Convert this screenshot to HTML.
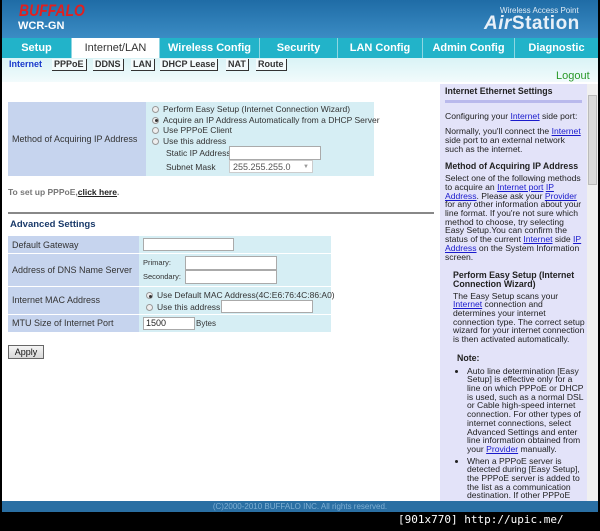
<!DOCTYPE html>
<html><head><style>
*{margin:0;padding:0;box-sizing:border-box}
body{width:600px;height:531px;background:#000;font-family:"Liberation Sans",Arial,sans-serif;position:relative;overflow:hidden;font-size:9px;color:#333}
.a{position:absolute}
#page{left:2px;top:0;width:596px;height:512px;background:#fff}
#hdr{left:2px;top:0;width:596px;height:38px;background:linear-gradient(#1f6ca6,#3b8cc4)}
.tab{position:absolute;top:38px;height:20px;background:#22b3c9;color:#fff;font-weight:bold;font-size:11px;text-align:center;line-height:20px;border-right:1px solid #8fd6e2}
.tab.on{background:#fff;color:#333;font-weight:normal}
#sub{left:2px;top:58px;width:596px;height:24px;background:linear-gradient(#d9f3f6,#f2fbfc)}
.st{position:absolute;top:59px;font-size:9px;font-weight:bold;color:#333;border-right:1px solid #333;border-bottom:1px solid #333;padding:0 2px;line-height:11px;background:#f4fbfc}
a{color:#1a1acc;text-decoration:underline}
.lab{background:#c6d4ee}
.val{background:#d6eef4}
input.t{border:1px solid #aaa;background:#fff;height:12px;position:absolute}
.rad{display:inline-block;width:7px;height:7px;border:1px solid #999;border-radius:50%;background:#eee;vertical-align:middle;margin-right:4px;position:relative}
.rad.on::after{content:"";position:absolute;left:1.5px;top:1.5px;width:3px;height:3px;border-radius:50%;background:#333}
#help{left:440px;top:84px;width:147px;height:417px;background:#e3e3f9;font-size:8.6px;color:#222;line-height:8.7px;padding:3px 2px 3px 5px;overflow:hidden}
#help p{margin-bottom:7px}
#help h4{font-size:8.8px;margin-bottom:4px}
</style></head><body>
<div class="a" id="page"></div>
<div class="a" id="hdr"></div>
<div class="a" style="left:19px;top:1px;color:#e02020;font-weight:bold;font-style:italic;font-size:17px;transform:scaleX(0.82);transform-origin:left top">BUFFALO</div>
<div class="a" style="left:18px;top:20px;color:#fff;font-weight:bold;font-size:11px">WCR-GN</div>
<div class="a" style="left:500px;top:6px;color:#dfeaf4;font-size:8px">Wireless Access Point</div>
<div class="a" style="left:484px;top:13px;color:#e8f0f8;font-weight:bold;font-size:19px;letter-spacing:0.5px"><i>Air</i>Station</div>
<div class="tab" style="left:2px;width:70px">Setup</div>
<div class="tab on" style="left:72px;width:88px">Internet/LAN</div>
<div class="tab" style="left:160px;width:100px">Wireless Config</div>
<div class="tab" style="left:260px;width:78px">Security</div>
<div class="tab" style="left:338px;width:85px">LAN Config</div>
<div class="tab" style="left:423px;width:92px">Admin Config</div>
<div class="tab" style="left:515px;width:83px;border:none">Diagnostic</div>
<div class="a" id="sub"></div>
<div class="a" style="left:9px;top:59px;font-size:9px;font-weight:bold;color:#1a3acc;line-height:11px">Internet</div>
<div class="st" style="left:52px">PPPoE</div>
<div class="st" style="left:93px">DDNS</div>
<div class="st" style="left:131px">LAN</div>
<div class="st" style="left:160px">DHCP Lease</div>
<div class="st" style="left:226px">NAT</div>
<div class="st" style="left:256px">Route</div>
<div class="a" style="left:556px;top:70px;color:#2a9a2a;font-size:11px">Logout</div>

<div class="a lab" style="left:8px;top:102px;width:138px;height:74px"></div>
<div class="a val" style="left:146px;top:102px;width:228px;height:74px"></div>
<div class="a" style="left:12px;top:134px;font-size:9px">Method of Acquiring IP Address</div>
<div class="a" style="left:152px;top:104px;font-size:8.5px;line-height:10.5px">
<div><span class="rad"></span>Perform Easy Setup (Internet Connection Wizard)</div>
<div><span class="rad on"></span>Acquire an IP Address Automatically from a DHCP Server</div>
<div><span class="rad"></span>Use PPPoE Client</div>
<div><span class="rad"></span>Use this address</div>
</div>
<div class="a" style="left:166px;top:148px;font-size:8.5px">Static IP Address</div>
<div class="a" style="left:166px;top:162px;font-size:8.5px">Subnet Mask</div>
<input class="t" style="left:229px;top:146px;width:92px;height:14px">
<div class="a" style="left:229px;top:160px;width:84px;height:13px;background:#fff;border:1px solid #ccc;font-size:9px;color:#555;padding-left:3px;line-height:12px">255.255.255.0<span style="position:absolute;right:3px;font-size:6px;color:#999">▼</span></div>
<div class="a" style="left:8px;top:187px;font-size:8.5px;color:#777;font-weight:bold">To set up PPPoE,<span style="color:#222;text-decoration:underline">click here</span>.</div>

<div class="a" style="left:8px;top:212px;width:426px;height:2px;background:#888"></div>
<div class="a" style="left:10px;top:219px;font-size:9.5px;font-weight:bold;color:#1a3a6a">Advanced Settings</div>
<div class="a lab" style="left:8px;top:236px;width:131px;height:96px"></div>
<div class="a val" style="left:139px;top:236px;width:192px;height:96px"></div>
<div class="a" style="left:8px;top:253px;width:323px;height:1px;background:#fff"></div>
<div class="a" style="left:8px;top:286px;width:323px;height:1px;background:#fff"></div>
<div class="a" style="left:8px;top:314px;width:323px;height:1px;background:#fff"></div>
<div class="a" style="left:12px;top:240px;font-size:9px">Default Gateway</div>
<div class="a" style="left:12px;top:265px;font-size:9px">Address of DNS Name Server</div>
<div class="a" style="left:12px;top:295px;font-size:9px">Internet MAC Address</div>
<div class="a" style="left:12px;top:318px;font-size:9px">MTU Size of Internet Port</div>
<input class="t" style="left:143px;top:238px;width:91px;height:13px">
<div class="a" style="left:143px;top:258px;font-size:7.5px">Primary:</div>
<div class="a" style="left:143px;top:272px;font-size:7.5px">Secondary:</div>
<input class="t" style="left:185px;top:256px;width:92px;height:14px">
<input class="t" style="left:185px;top:270px;width:92px;height:14px">
<div class="a" style="left:146px;top:289px;font-size:8.5px;line-height:12px"><div><span class="rad on"></span>Use Default MAC Address(4C:E6:76:4C:86:A0)</div><div><span class="rad"></span>Use this address</div></div>
<input class="t" style="left:221px;top:300px;width:92px;height:13px">
<input class="t" style="left:143px;top:317px;width:52px;height:13px">
<div class="a" style="left:146px;top:318px;font-size:9px;color:#222">1500</div>
<div class="a" style="left:196px;top:319px;font-size:8px">Bytes</div>
<div class="a" style="left:8px;top:345px;width:36px;height:14px;border:1px solid #666;background:linear-gradient(#f4f4f4,#d8d8d8);font-size:9px;text-align:center;line-height:12px;color:#111">Apply</div>

<div class="a" id="help">
<h4>Internet Ethernet Settings</h4>
<div style="height:3px;background:#b9b9ec;margin-bottom:9px;margin-right:3px"></div>
<p>Configuring your <a>Internet</a> side port:</p>
<p>Normally, you'll connect the <a>Internet</a> side port to an external network such as the internet.</p>
<h4 style="margin-top:8px">Method of Acquiring IP Address</h4>
<p>Select one of the following methods to acquire an <a>Internet port</a> <a>IP Address</a>. Please ask your <a>Provider</a> for any other information about your line format. If you're not sure which method to choose, try selecting Easy Setup.You can confirm the status of the current <a>Internet</a> side <a>IP Address</a> on the System Information screen.</p>
<div style="padding-left:8px;padding-top:3px">
<h4 style="margin-bottom:3px">Perform Easy Setup (Internet Connection Wizard)</h4>
<p>The Easy Setup scans your <a>Internet</a> connection and determines your internet connection type. The correct setup wizard for your internet connection is then activated automatically.</p>
<h4 style="padding-left:4px;margin-top:10px">Note:</h4>
<ul style="padding-left:14px;padding-right:0"><li style="margin-bottom:3px">Auto line determination [Easy Setup] is effective only for a line on which PPPoE or DHCP is used, such as a normal DSL or Cable high-speed internet connection. For other types of internet connections, select Advanced Settings and enter line information obtained from your <a>Provider</a> manually.</li>
<li>When a PPPoE server is detected during [Easy Setup], the PPPoE server is added to the list as a communication destination. If other PPPoE connection information is already registered it will be</li></ul>
</div>
</div>
<div class="a" style="left:587px;top:84px;width:11px;height:417px;background:#f0f0f0"></div>
<div class="a" style="left:588px;top:95px;width:9px;height:90px;background:#dadada;border:1px solid #bbb"></div>
<div class="a" style="left:2px;top:501px;width:596px;height:11px;background:#2a6fa3;color:#7fb0d5;font-size:8px;text-align:center;line-height:11px">(C)2000-2010 BUFFALO INC. All rights reserved.</div>
<div class="a" style="left:398px;top:513px;color:#fff;font-family:'DejaVu Sans Mono',monospace;font-size:11px">[901x770] http://upic.me/</div>
</body></html>
